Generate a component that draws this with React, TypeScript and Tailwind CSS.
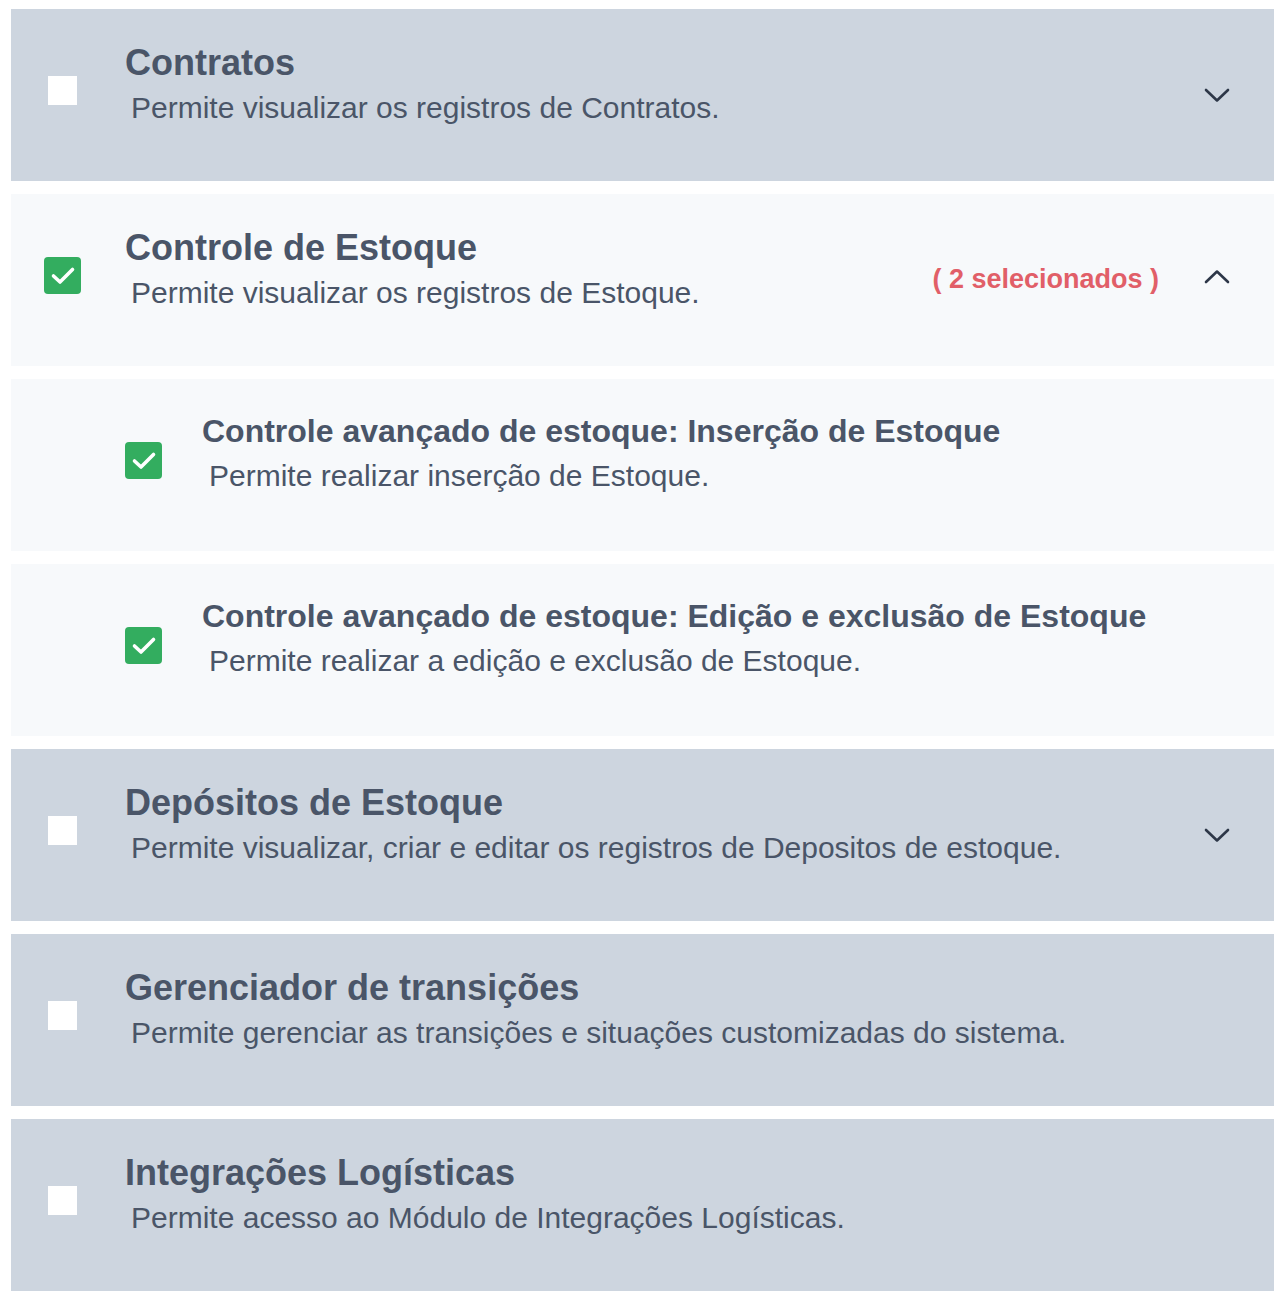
import React from 'react';

type Item = {
  title: string;
  desc: string;
  checked?: boolean;
  expanded?: boolean;
  selectedCount?: number;
  sub?: boolean;
  noChevron?: boolean;
};

const items: Item[] = [
  { title: 'Contratos', desc: 'Permite visualizar os registros de Contratos.' },
  {
    title: 'Controle de Estoque',
    desc: 'Permite visualizar os registros de Estoque.',
    checked: true,
    expanded: true,
    selectedCount: 2,
  },
  {
    title: 'Controle avançado de estoque: Inserção de Estoque',
    desc: 'Permite realizar inserção de Estoque.',
    checked: true,
    sub: true,
  },
  {
    title: 'Controle avançado de estoque: Edição e exclusão de Estoque',
    desc: 'Permite realizar a edição e exclusão de Estoque.',
    checked: true,
    sub: true,
  },
  { title: 'Depósitos de Estoque', desc: 'Permite visualizar, criar e editar os registros de Depositos de estoque.' },
  { title: 'Gerenciador de transições', desc: 'Permite gerenciar as transições e situações customizadas do sistema.', noChevron: true },
  { title: 'Integrações Logísticas', desc: 'Permite acesso ao Módulo de Integrações Logísticas.', noChevron: true },
];

function Checkbox({ checked }: { checked?: boolean }) {
  if (!checked) return <div className="w-[29px] h-[29px] bg-white" />;
  return (
    <div className="w-[37px] h-[37px] rounded-[4px] bg-[#33ad5f] flex items-center justify-center">
      <svg width="37" height="37" viewBox="0 0 37 37" fill="none">
        <polyline
          points="9.5,19 16,25 28.5,12.5"
          stroke="white"
          strokeWidth="3.6"
          strokeLinecap="round"
          strokeLinejoin="round"
        />
      </svg>
    </div>
  );
}

function Chevron({ up }: { up?: boolean }) {
  return (
    <svg width="26" height="15" viewBox="0 0 26 15" fill="none">
      <polyline
        points={up ? '2,13 13,2.5 24,13' : '2,2 13,12.5 24,2'}
        stroke="#2d3748"
        strokeWidth="2.6"
        strokeLinecap="round"
        strokeLinejoin="round"
      />
    </svg>
  );
}

function Row({ item }: { item: Item }) {
  const light = item.checked;
  return (
    <div
      className={`h-[172px] flex items-start ${light ? 'bg-[#f7f9fb]' : 'bg-[#cdd5df]'} ${
        item.sub ? 'pl-[81px]' : ''
      }`}
    >
      {/* checkbox column */}
      <div className="w-[103px] h-[163px] flex items-center justify-center shrink-0">
        <Checkbox checked={item.checked} />
      </div>

      {/* text */}
      <div className={`flex-1 flex flex-col ${item.sub ? 'ml-[7px] pt-[32px]' : 'ml-[11px] pt-[32px]'}`}>
        <div
          className={`font-bold text-[#4a5568] ${
            item.sub ? 'text-[32px] leading-[40px]' : 'text-[36px] leading-[44px]'
          }`}
        >
          {item.title}
        </div>
        <div
          className={`text-[30px] leading-[36px] text-[#4a5568] ${
            item.sub ? 'ml-[7px] mt-[7px]' : 'ml-[6px] mt-[5px]'
          }`}
        >
          {item.desc}
        </div>
      </div>

      {/* right side */}
      {!item.sub && !item.noChevron && (
        <div className="h-[172px] flex items-center pr-[44px] shrink-0">
          {item.selectedCount !== undefined && (
            <span className="text-[27px] font-bold text-[#e15f68] mr-[45px] mb-[2px]">
              ( {item.selectedCount} selecionados )
            </span>
          )}
          <div className={item.expanded ? 'mb-[8px]' : 'mt-[1px]'}>
            <Chevron up={item.expanded} />
          </div>
        </div>
      )}
    </div>
  );
}

export default function App() {
  return (
    <div
      className="w-[1280px] min-h-[1304px] bg-white pt-[9px] px-[11px] pr-[6px] flex flex-col gap-[13px]"
      style={{ fontFamily: '"Liberation Sans", Arial, sans-serif' }}
    >
      {items.map((item, i) => (
        <Row key={i} item={item} />
      ))}
    </div>
  );
}
